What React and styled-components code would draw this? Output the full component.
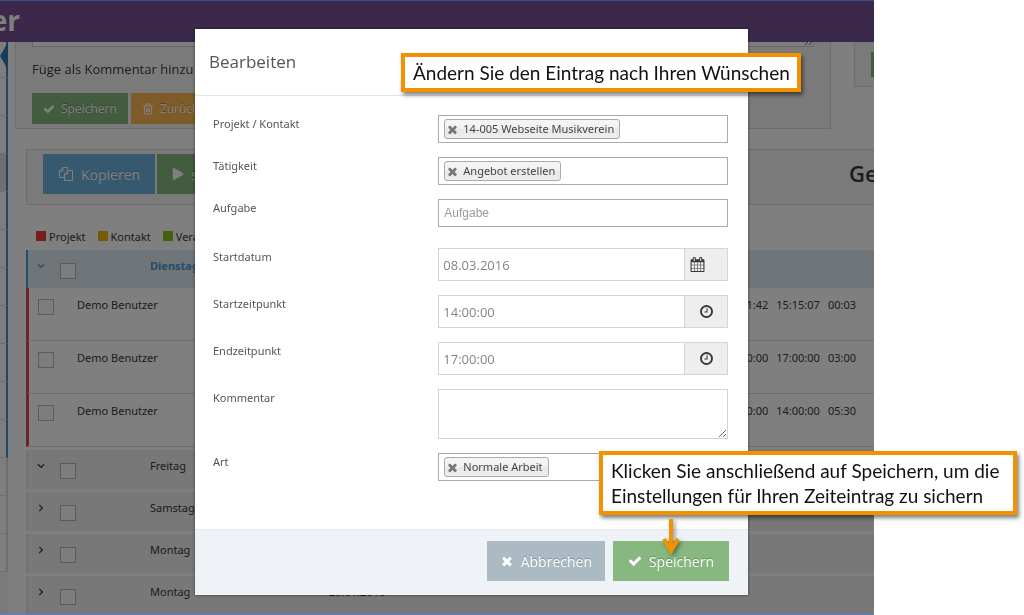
import React, { useState } from "react";
import styled, { createGlobalStyle, css } from "styled-components";
import { FaPlay, FaChevronDown, FaChevronRight } from "react-icons/fa";

const PATHS = {
  check:
    "M1671 566q0 40-28 68l-724 724-136 136q-28 28-68 28t-68-28l-136-136-362-362q-28-28-28-68t28-68l136-136q28-28 68-28t68 28l294 295 656-657q28-28 68-28t68 28l136 136q28 28 28 68z",
  times:
    "M1490 1322q0 40-28 68l-136 136q-28 28-68 28t-68-28l-294-294-294 294q-28 28-68 28t-68-28l-136-136q-28-28-28-68t28-68l294-294-294-294q-28-28-28-68t28-68l136-136q28-28 68-28t68 28l294 294 294-294q28-28 68-28t68 28l136 136q28 28 28 68t-28 68l-294 294 294 294q28 28 28 68z",
  clock:
    "M1024 544v448q0 14-9 23t-23 9h-320q-14 0-23-9t-9-23v-64q0-14 9-23t23-9h224v-352q0-14 9-23t23-9h64q14 0 23 9t9 23zm416 352q0-148-73-273t-198-198-273-73-273 73-198 198-73 273 73 273 198 198 273 73 273-73 198-198 73-273zm224 0q0 209-103 385.5t-279.5 279.5-385.5 103-385.5-103-279.5-279.5-103-385.5 103-385.5 279.5-279.5 385.5-103 385.5 103 279.5 279.5 103 385.5z",
  calendar:
    "M192 1664h288v-288h-288v288zm352 0h320v-288h-320v288zm-352-352h288v-320h-288v320zm352 0h320v-320h-320v320zm-352-384h288v-288h-288v288zm736 736h320v-288h-320v288zm-384-736h320v-288h-320v288zm768 736h288v-288h-288v288zm-384-352h320v-320h-320v320zm-352-864v-288q0-13-9.500-22.500t-22.500-9.500h-64q-13 0-22.500 9.500t-9.500 22.500v288q0 13 9.500 22.500t22.500 9.500h64q13 0 22.500-9.500t9.500-22.500zm736 864h288v-320h-288v320zm-384-384h320v-288h-320v288zm384 0h288v-288h-288v288zm32-480v-288q0-13-9.500-22.500t-22.500-9.500h-64q-13 0-22.500 9.500t-9.500 22.500v288q0 13 9.500 22.500t22.500 9.500h64q13 0 22.500-9.500t9.500-22.500zm384-64v1280q0 52-38 90t-90 38h-1408q-52 0-90-38t-38-90v-1280q0-52 38-90t90-38h128v-96q0-66 47-113t113-47h64q66 0 113 47t47 113v96h384v-96q0-66 47-113t113-47h64q66 0 113 47t47 113v96h128q52 0 90 38t38 90z",
};

const Icon = ({ name, size = 14 }) => (
  <svg
    width={size}
    height={size}
    viewBox="0 0 1792 1792"
    fill="currentColor"
    aria-hidden="true"
  >
    <path d={PATHS[name]} />
  </svg>
);

const CopyIcon = () => (
  <svg width="16" height="16" viewBox="0 0 16 16" fill="none" stroke="currentColor" aria-hidden="true">
    <path d="M6 11.500H1.500V5L5 1.500h4.500V4M5 1.500V5H1.500M6.500 14.500V8L10 4.500h4.500v10zM10 4.500V8H6.500" />
  </svg>
);

const TrashIcon = () => (
  <svg width="12" height="12" viewBox="0 0 12 12" fill="none" stroke="currentColor" aria-hidden="true">
    <path d="M1 3h10M4 3V1h4v2M2.500 3v8h7V3M4.500 5v4M6 5v4M7.500 5v4" />
  </svg>
);

const navItems = [
  { open: true },
  { open: true },
  { open: true },
  { open: true, active: true },
  { open: true },
  { open: true },
  { open: true },
  { open: true },
  { open: true },
  { open: true },
  { open: true },
  {},
  {},
  {},
];

const legend = [
  { label: "Projekt", color: "#e83c40" },
  { label: "Kontakt", color: "#eab308" },
  { label: "Veranstaltung", color: "#8cc024" },
];

const entries = [
  { user: "Demo Benutzer", from: "15:11:42", to: "15:15:07", sum: "00:03" },
  { user: "Demo Benutzer", from: "14:00:00", to: "17:00:00", sum: "03:00" },
  { user: "Demo Benutzer", from: "08:30:00", to: "14:00:00", sum: "05:30" },
];

const days = [
  { name: "Freitag", date: "04.03.2016", open: true },
  { name: "Samstag", date: "27.02.2016" },
  { name: "Montag", date: "22.02.2016" },
  { name: "Montag", date: "29.01.2016" },
];

const TagField = ({ id, label, value }) => (
  <>
    <StLabel htmlFor={id}>{label}</StLabel>
    <StTagBox>
      <StTag>
        <button type="button" aria-label={`${value} entfernen`}>
          <Icon name="times" size={13} />
        </button>
        {value}
      </StTag>
      <input id={id} type="text" />
    </StTagBox>
  </>
);

const PickerField = ({ id, label, icon, initial, $spaced }) => {
  const [value, setValue] = useState(initial);
  return (
    <>
      <StLabel htmlFor={id} $spaced={$spaced}>
        {label}
      </StLabel>
      <StPicker $spaced={$spaced}>
        <input
          id={id}
          type="text"
          value={value}
          onChange={(e) => setValue(e.target.value)}
        />
        <StAddon type="button" aria-label={`${label} wählen`} $start={icon === "calendar"}>
          <Icon name={icon} size={15} />
        </StAddon>
      </StPicker>
    </>
  );
};

const EditDialog = () => (
  <StDialog role="dialog" aria-labelledby="dialog-title">
    <StDialogHeader>
      <h4 id="dialog-title">Bearbeiten</h4>
    </StDialogHeader>
    <StForm>
      <TagField id="project" label="Projekt / Kontakt" value="14-005 Webseite Musikverein" />
      <TagField id="activity" label="Tätigkeit" value="Angebot erstellen" />
      <StLabel htmlFor="task">Aufgabe</StLabel>
      <StTextInput id="task" type="text" placeholder="Aufgabe" />
      <PickerField id="date" label="Startdatum" icon="calendar" initial="08.03.2016" $spaced />
      <PickerField id="start" label="Startzeitpunkt" icon="clock" initial="14:00:00" />
      <PickerField id="end" label="Endzeitpunkt" icon="clock" initial="17:00:00" />
      <StLabel htmlFor="comment">Kommentar</StLabel>
      <StTextarea id="comment" />
      <TagField id="kind" label="Art" value="Normale Arbeit" />
    </StForm>
    <StDialogFooter>
      <StButton type="button" $color="#abbac3">
        <Icon name="times" />
        Abbrechen
      </StButton>
      <StButton type="button" $color="#87b87f">
        <Icon name="check" />
        Speichern
      </StButton>
    </StDialogFooter>
  </StDialog>
);

const App = () => {
  return (
    <>
      <GlobalStyle />
      <StPage>
        <StWindow>
          <StTopBar>
            <StLogo>er</StLogo>
          </StTopBar>
          <StBody>
            <StSidebar>
              {navItems.map((el, idx) => (
                <StNavItem key={idx} $open={el.open} $active={el.active} />
              ))}
              <StNavArrow />
            </StSidebar>
            <StMain>
              <StPanels>
                <StCommentPanel>
                  <StPanelTextarea aria-label="Beschreibung" />
                  <p>Füge als Kommentar hinzu</p>
                  <StButtonRow>
                    <StButton type="button" $small $color="#87b87f">
                      <Icon name="check" size={12} />
                      Speichern
                    </StButton>
                    <StButton type="button" $small $color="#ffb752">
                      <TrashIcon />
                      Zurücksetzen
                    </StButton>
                  </StButtonRow>
                </StCommentPanel>
                <StSidePanel>
                  <StButton type="button" $small $color="#87b87f" aria-label="Hinzufügen" />
                </StSidePanel>
              </StPanels>
              <StToolbar>
                <StButton type="button" $color="#6fb3e0">
                  <CopyIcon />
                  Kopieren
                </StButton>
                <StButton type="button" $color="#87b87f">
                  <FaPlay size={12} />
                  starten
                </StButton>
                <h3>Ge</h3>
              </StToolbar>
              <StLegend>
                {legend.map((el) => (
                  <StLegendItem key={el.label} $color={el.color}>
                    {el.label}
                  </StLegendItem>
                ))}
              </StLegend>
              <StTable>
                <tbody>
                  <StDayRow $current>
                    <td>
                      <FaChevronDown size={8} />
                    </td>
                    <td>
                      <StCheck type="checkbox" aria-label="Dienstag auswählen" />
                    </td>
                    <StDayName>Dienstag</StDayName>
                  </StDayRow>
                  {entries.map((el, idx) => (
                    <StEntryRow key={idx}>
                      <td>
                        <StCheck type="checkbox" aria-label={`Eintrag ${idx + 1} auswählen`} />
                      </td>
                      <StUser>{el.user}</StUser>
                      <td>{el.from}</td>
                      <td>{el.to}</td>
                      <td>{el.sum}</td>
                    </StEntryRow>
                  ))}
                  {days.map((el, idx) => (
                    <StDayRow key={idx}>
                      <td>
                        {el.open ? <FaChevronDown size={8} /> : <FaChevronRight size={8} />}
                      </td>
                      <td>
                        <StCheck type="checkbox" aria-label={`${el.name} auswählen`} />
                      </td>
                      <StDayName>{el.name}</StDayName>
                      <td>{el.date}</td>
                    </StDayRow>
                  ))}
                </tbody>
              </StTable>
            </StMain>
          </StBody>
          <StBackdrop>
            <EditDialog />
          </StBackdrop>
        </StWindow>
        <StEditNote>Ändern Sie den Eintrag nach Ihren Wünschen</StEditNote>
        <StSaveNote>
          Klicken Sie anschließend auf Speichern, um die
          <br />
          Einstellungen für Ihren Zeiteintrag zu sichern
        </StSaveNote>
        <StArrow width="20" height="38" viewBox="0 0 20 38" fill="none" stroke="#f39200" strokeWidth="4">
          <path d="M10 1v32M3 21l7 12 7-12" />
        </StArrow>
      </StPage>
    </>
  );
};
export default App;

const GlobalStyle = createGlobalStyle`
  * {
    box-sizing: border-box;
  }
  body {
    margin: 0;
    background: white;
    font-family: "Noto Sans", "Open Sans", sans-serif;
    font-size: 11px;
    line-height: 18px;
    color: #393939;
  }
  h3, h4, p {
    margin: 0;
    font-weight: 400;
  }
  h3, h4, p, button, input, textarea {
    font-family: "Open Sans", sans-serif;
  }
`;

const StPage = styled.div`
  position: relative;
  display: grid;
  grid-template-columns: minmax(0, 1fr) 150px;
  height: 100vh;
  overflow: hidden;
`;

const StWindow = styled.div`
  position: relative;
  display: flex;
  flex-direction: column;
  min-height: 0;
  overflow: hidden;
  border-top: 1px solid #3d4a8c;
  border-bottom: 1px solid #5f82bd;
`;

const StTopBar = styled.header`
  flex: none;
  height: 41px;
  background: #765096;
`;

const StLogo = styled.div`
  display: flex;
  justify-content: flex-end;
  width: 20px;
  overflow: hidden;

  font-family: "Open Sans", sans-serif;
  font-size: 28px;
  font-weight: 700;
  line-height: 38px;
  color: white;
`;

const StBody = styled.div`
  display: flex;
  flex: 1;
  min-height: 0;
`;

const StSidebar = styled.nav`
  position: relative;
  flex: none;
  display: flex;
  flex-direction: column;
  width: 8px;
  overflow: hidden;
  background: #f5f5f5;
`;

const StNavItem = styled.div`
  flex: none;
  height: 38px;
  border-bottom: 1px solid #dcdcdc;
  border-right: 2px solid ${({ $open }) => ($open ? "#3b8fd0" : "#dcdcdc")};
  background: ${({ $active }) => ($active ? "#dedede" : "#fcfcfc")};

  &:first-child {
    height: 36px;
  }
`;

const StNavArrow = styled.span`
  position: absolute;
  top: 0;
  right: 0;
  border-right: 8px solid #2b7dbc;
  border-top: 14px solid transparent;
  border-bottom: 14px solid transparent;
`;

const StMain = styled.main`
  flex: 1;
  min-width: 0;
  overflow: hidden;
`;

const StPanels = styled.div`
  display: flex;
  gap: 23px;
  align-items: flex-start;
  padding-left: 7px;
`;

const panel = css`
  border: 1px solid #dcdcdc;
  background: #f5f5f5;
`;

const StCommentPanel = styled.section`
  ${panel}
  flex: 1;
  height: 87px;
  padding: 0 16px;
  border-top: 0;

  p {
    padding: 12px 0 14px;
    font-size: 13px;
    line-height: 20px;
    white-space: nowrap;
  }
`;

const StPanelTextarea = styled.textarea`
  display: block;
  width: 100%;
  height: 5px;
  border: 1px solid #d0d0d0;
  border-top: 0;
  background: white;
`;

const StSidePanel = styled.section`
  ${panel}
  flex: none;
  width: 20px;
  height: 45px;
  padding: 10px 0 0 16px;
  border-top: 0;
  border-right: 0;
  overflow: hidden;

  button {
    height: 25px;
  }
`;

const StButtonRow = styled.div`
  display: flex;
  gap: 3px;
`;

const StButton = styled.button`
  flex: none;
  display: flex;
  justify-content: center;
  align-items: center;
  gap: ${({ $small }) => ($small ? 6 : 7)}px;
  height: ${({ $small }) => ($small ? 31 : 40)}px;
  padding: 0 ${({ $small }) => ($small ? 11 : 15)}px;
  border: 0;
  background: ${({ $color }) => $color};
  color: white;
  font-size: ${({ $small }) => ($small ? 12 : 14)}px;
  text-shadow: 0 -1px 0 rgba(0, 0, 0, 0.25);
`;

const StToolbar = styled.div`
  ${panel}
  display: flex;
  gap: 2px;
  height: 56px;
  margin: 20px 0 0 18px;
  padding: 4px 0 0 16px;
  border-right: 0;

  h3 {
    width: 25px;
    margin-left: auto;
    overflow: hidden;
    font-size: 22px;
    font-weight: 600;
    line-height: 38px;
  }
`;

const StLegend = styled.div`
  display: flex;
  gap: 12px;
  margin: 23px 0 4px 28px;
`;

const StLegendItem = styled.span`
  display: flex;
  gap: 3px;

  &::before {
    content: "";
    width: 10px;
    height: 10px;
    margin-top: 3px;
    background: ${({ $color }) => $color};
  }
`;

const StTable = styled.table`
  display: block;
  margin-left: 18px;

  tbody {
    display: block;
  }
  td {
    flex: none;
    padding: 0;
  }
`;

const StDayName = styled.td`
  width: 179px;
`;

const StDayRow = styled.tr`
  display: flex;
  height: 39px;
  margin-top: 3px;
  padding: 7px 0 0 9px;
  border-left: 2px solid #e4e4e4;
  background: #f0f0f0;

  td:first-child {
    width: 23px;
  }
  td:nth-child(2) {
    width: 90px;
    padding-top: 6px;
  }

  ${({ $current }) =>
    $current &&
    css`
      height: 38px;
      margin-top: 0;
      border-left-color: #4c96cc;
      background: #e0ebf2;
      color: #4c96cc;

      ${StDayName} {
        font-weight: 700;
      }
    `}
`;

const StUser = styled.td`
  flex: 1 1 0;
`;

const StEntryRow = styled.tr`
  display: flex;
  gap: 8px;
  height: 53px;
  padding: 8px 18px 0 9px;
  border-left: 3px solid #e0474c;
  border-bottom: 1px solid #dcdcdc;

  td:first-child {
    width: 31px;
    padding-top: 3px;
  }
  ${StUser} {
    flex: 1;
  }
`;

const StCheck = styled.input`
  appearance: none;
  display: block;
  width: 16px;
  height: 16px;
  margin: 0;
  border: 1px solid #b8b8b8;
  background: #fafafa;
`;

const StBackdrop = styled.div`
  position: absolute;
  inset: 0;
  padding: 28px 126px 0 195px;
  background: rgba(0, 0, 0, 0.5);
`;

const StDialog = styled.div`
  background: white;
  box-shadow: 0 0 3px rgba(0, 0, 0, 0.5);
`;

const StDialogHeader = styled.div`
  padding: 20px 14px;
  border-bottom: 1px solid #e5e5e5;

  h4 {
    font-size: 17px;
    line-height: 26px;
    color: #555;
  }
`;

const StForm = styled.form`
  display: grid;
  grid-template-columns: minmax(0, 7fr) minmax(0, 9fr);
  row-gap: 14px;
  padding: 19px 20px 48px 18px;
`;

const StLabel = styled.label`
  margin-top: ${({ $spaced }) => ($spaced ? 7 : 0)}px;
  color: #555;
`;

const StTagBox = styled.div`
  display: flex;
  height: 28px;
  padding: 3px 5px;
  border: 1px solid #aaa;

  input {
    flex: 1;
    min-width: 0;
    padding: 0;
    border: 0;
    outline: 0;
    background: transparent;
  }
`;

const StTag = styled.span`
  display: flex;
  align-items: center;
  gap: 4px;
  height: 20px;
  padding: 0 5px 0 1px;
  border: 1px solid #aaa;
  border-radius: 3px;
  background: linear-gradient(#f4f4f4 20%, #f0f0f0 50%, #e8e8e8 52%, #eee 100%);
  color: #444;
  white-space: nowrap;

  button {
    display: flex;
    padding: 0;
    border: 0;
    background: none;
    color: #777;
  }
`;

const StTextInput = styled.input`
  width: 100%;
  height: 28px;
  padding: 0 5px;
  border: 1px solid #aaa;

  &::placeholder {
    color: #999;
  }
  && {
    font-family: "Liberation Sans", Arial, sans-serif;
    font-size: 12px;
  }
`;

const StPicker = styled.div`
  display: flex;
  height: 33px;
  margin-top: ${({ $spaced }) => ($spaced ? 7 : 0)}px;
  border: 1px solid #d5d5d5;

  input {
    flex: 1;
    min-width: 0;
    padding: 0 4px;
    border: 0;
    font-size: 13px;
    color: #858585;
  }
`;

const StAddon = styled.button`
  display: flex;
  justify-content: ${({ $start }) => ($start ? "flex-start" : "center")};
  align-items: center;
  width: 43px;
  padding: 0 5px;
  border: 0;
  border-left: 1px solid #d5d5d5;
  background: #eee;
  color: #393939;
`;

const StTextarea = styled.textarea`
  display: block;
  width: 100%;
  height: 50px;
  border: 1px solid #d5d5d5;
  resize: vertical;
`;

const StDialogFooter = styled.div`
  display: flex;
  justify-content: flex-end;
  gap: 8px;
  padding: 11px 19px 14px;
  border-top: 1px solid #e4e9ee;
  background: #eff3f8;

  button {
    min-width: 116px;
    padding: 0 13px;
  }
`;

const StNote = styled.div`
  position: absolute;
  padding: 3px 8px;
  border: 4px solid #f39200;
  background: white;
  box-shadow: 2px 3px 4px rgba(0, 0, 0, 0.5);
  font-family: Lato, sans-serif;
  font-size: 19px;
  line-height: 25px;
  color: #111;
  white-space: nowrap;
`;

const StEditNote = styled(StNote)`
  top: 53px;
  right: 223px;
  width: 400px;
`;

const StSaveNote = styled(StNote)`
  top: 451px;
  right: 7px;
  width: 418px;
`;

const StArrow = styled.svg`
  position: absolute;
  top: 518px;
  right: 343px;
  filter: drop-shadow(2px 2px 2px rgba(0, 0, 0, 0.4));
`;
